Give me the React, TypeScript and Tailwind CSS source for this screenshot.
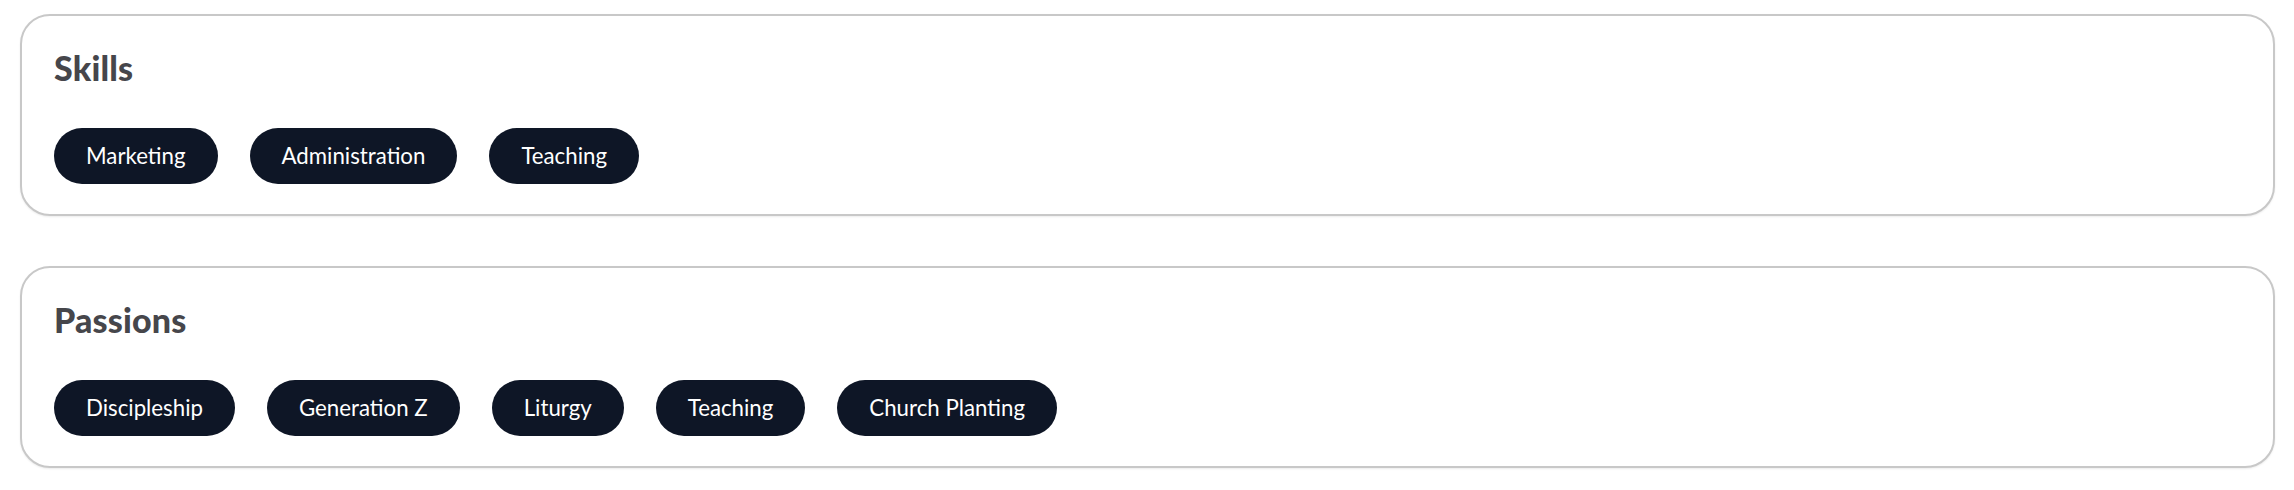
const SKILLS = ["Marketing", "Administration", "Teaching"]
const PASSIONS = ["Discipleship", "Generation Z", "Liturgy", "Teaching", "Church Planting"]

export default function App() {
  return (
    <div className="min-h-screen bg-white pl-[20px] pr-[19px] pt-[14px] pb-[20px] font-['Lato','Liberation_Sans',sans-serif]">
      <div className="flex flex-col gap-[50px]">
        <TagSection title="Skills" tags={SKILLS} />
        <TagSection title="Passions" tags={PASSIONS} />
      </div>
    </div>
  )
}

function TagSection({ title, tags }: { title: string; tags: string[] }) {
  return (
    <section className="rounded-[30px] border-2 border-[#c8c8c8] bg-white px-8 pt-[32px] pb-[30px] shadow-[0_1px_2px_rgba(0,0,0,0.08)]">
      <h2 className="text-[34px] leading-[40px] font-black tracking-[0.005em] text-[#46464b]">{title}</h2>
      <div className="mt-10 flex flex-wrap gap-8">
        {tags.map((tag) => (
          <span
            key={tag}
            className="flex h-14 items-center rounded-full bg-[#0e1626] px-8 text-[22.25px] text-white"
          >
            {tag}
          </span>
        ))}
      </div>
    </section>
  )
}
